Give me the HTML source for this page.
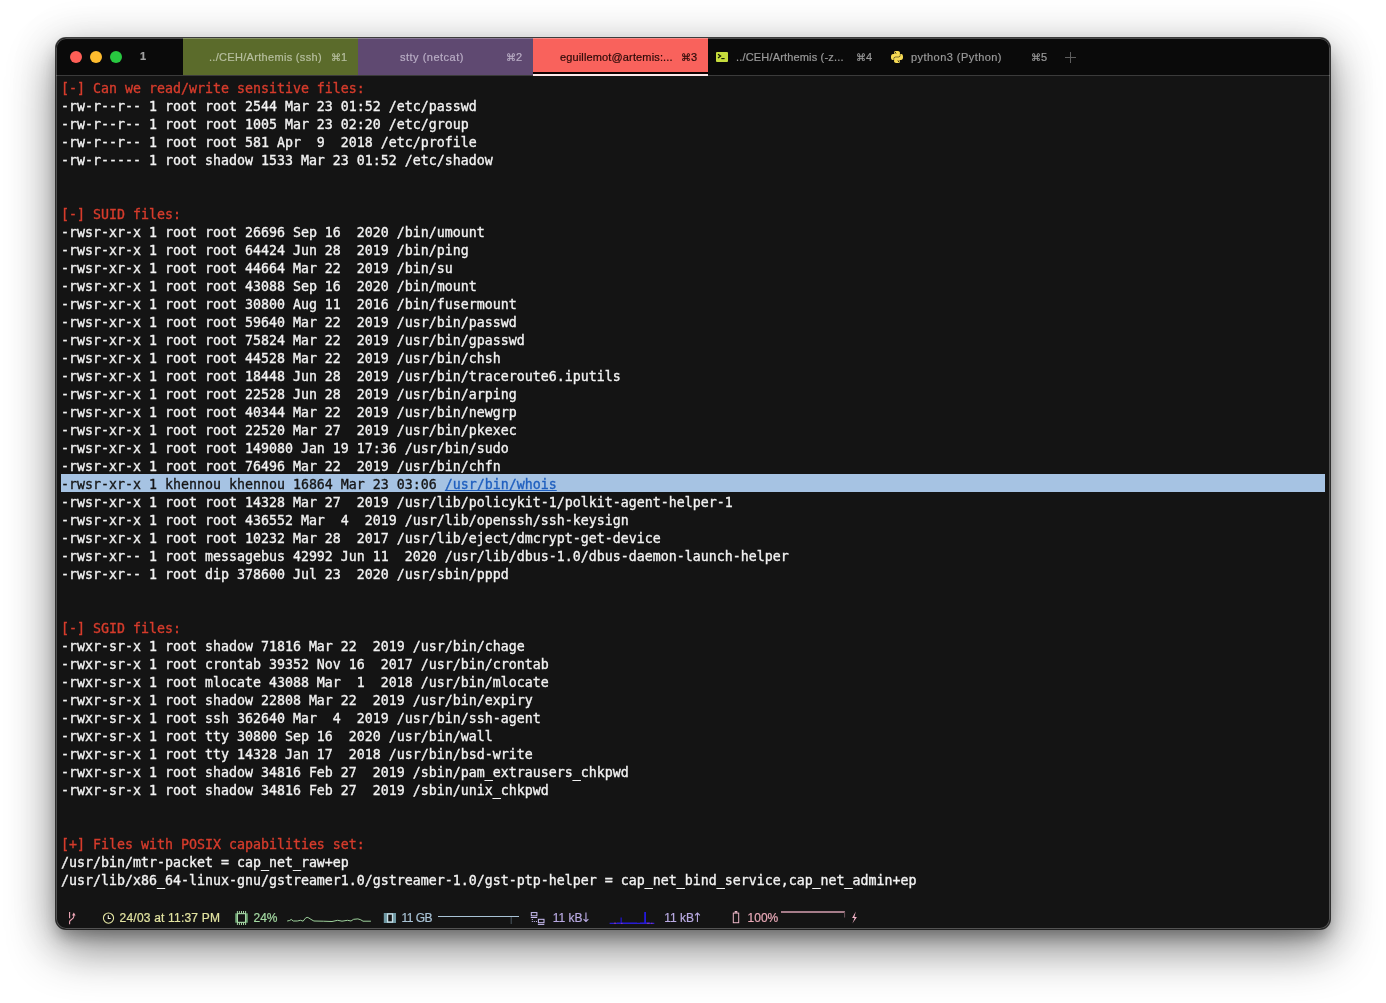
<!DOCTYPE html>
<html><head><meta charset="utf-8"><title>Terminal</title>
<style>
html,body{margin:0;padding:0;}
body{width:1386px;height:1003px;background:#fff;position:relative;overflow:hidden;font-family:"Liberation Sans",sans-serif;}
#win{position:absolute;left:56px;top:38px;width:1274px;height:891px;border-radius:10px;background:#141414;
 box-shadow:0 0 0 1px rgba(0,0,0,.72),0 20px 48px 0 rgba(0,0,0,.45),0 9px 16px -2px rgba(0,0,0,.3),0 4px 46px 8px rgba(0,0,0,.07);overflow:hidden;}
#win:after{content:"";position:absolute;left:0;top:0;right:0;bottom:0;border-radius:10px;box-shadow:inset 0 0 0 1px rgba(255,255,255,.27);pointer-events:none;}
#bar{position:absolute;left:0;top:0;width:100%;height:37px;background:#0a0a0a;border-bottom:1px solid #3b3b3b;}
.dot{position:absolute;top:13px;width:12px;height:12px;border-radius:50%;}
.tab{position:absolute;top:0;height:37px;width:175px;font-size:11px;line-height:38px;color:#9a9a9a;white-space:nowrap;-webkit-text-stroke:.2px currentColor;}
.tab .t{position:absolute;top:0;will-change:transform;}
.tab .k{position:absolute;top:0;right:11px;will-change:transform;}
.cmd{font-family:"DejaVu Sans","Liberation Sans",sans-serif;font-size:10px;}
#term{will-change:transform;position:absolute;left:5px;top:40px;width:1264px;font-family:"DejaVu Sans Mono","Liberation Mono",monospace;font-size:13.29px;line-height:18px;color:#f2f2f2;-webkit-text-stroke:.35px currentColor;}
.ln{height:18px;line-height:22px;white-space:pre;}
.hd{color:#d63c2c;}
.sel{background:#a6c3e3;color:#161616;}
.lk{color:#1f5fbf;text-decoration:underline;}
#status{will-change:transform;position:absolute;left:0;top:862px;width:100%;height:30px;font-size:12px;}
#status span{position:absolute;top:11.3px;-webkit-text-stroke:.2px currentColor;line-height:14px;white-space:nowrap;}
#status span.ar{position:static;font-family:"DejaVu Sans","Liberation Sans",sans-serif;font-size:13px;margin-left:-2px;line-height:0;-webkit-text-stroke:0;}
svg{position:absolute;overflow:visible;}
</style></head><body>
<div id="win">
<div id="bar">
 <div class="dot" style="left:14px;background:#fe5f57"></div>
 <div class="dot" style="left:34px;background:#febc2e"></div>
 <div class="dot" style="left:54px;background:#28c840"></div>
 <div class="tab" style="left:0;width:127px;"><span class="t" style="left:84px;top:-1px;color:#a2a2a2;font-weight:bold;font-size:11px">1</span></div>
 <div class="tab" style="left:127px;background:#5b6b2b;color:#b7bf9f"><span class="t" style="left:26px;letter-spacing:.31px">../CEH/Arthemis (ssh)</span><span class="k"><span class="cmd">⌘</span>1</span></div>
 <div class="tab" style="left:302px;background:#5f4971;color:#b9adc5"><span class="t" style="left:41.5px;letter-spacing:.5px">stty (netcat)</span><span class="k"><span class="cmd">⌘</span>2</span></div>
 <div class="tab" style="left:477px;background:#f9625c;color:#2a0a08;height:34px"><span class="t" style="left:26.5px;letter-spacing:.14px">eguillemot@artemis:...</span><span class="k"><span class="cmd">⌘</span>3</span></div>
 <div style="position:absolute;left:477px;top:34px;width:175px;height:1.7px;background:#100000"></div>
 <div style="position:absolute;left:477px;top:35.7px;width:175px;height:2.3px;background:#fde9ea"></div>
 <div class="tab" style="left:652px;"><span class="t" style="left:28.2px;letter-spacing:.17px">../CEH/Arthemis (-z...</span><span class="k"><span class="cmd">⌘</span>4</span></div>
 <div class="tab" style="left:827px;"><span class="t" style="left:28px;letter-spacing:.45px">python3 (Python)</span><span class="k"><span class="cmd">⌘</span>5</span></div>
</div>
<div id="term">
<div class="ln hd">[-] Can we read/write sensitive files:</div>
<div class="ln">-rw-r--r-- 1 root root 2544 Mar 23 01:52 /etc/passwd</div>
<div class="ln">-rw-r--r-- 1 root root 1005 Mar 23 02:20 /etc/group</div>
<div class="ln">-rw-r--r-- 1 root root 581 Apr  9  2018 /etc/profile</div>
<div class="ln">-rw-r----- 1 root shadow 1533 Mar 23 01:52 /etc/shadow</div>
<div class="ln">&nbsp;</div>
<div class="ln">&nbsp;</div>
<div class="ln hd">[-] SUID files:</div>
<div class="ln">-rwsr-xr-x 1 root root 26696 Sep 16  2020 /bin/umount</div>
<div class="ln">-rwsr-xr-x 1 root root 64424 Jun 28  2019 /bin/ping</div>
<div class="ln">-rwsr-xr-x 1 root root 44664 Mar 22  2019 /bin/su</div>
<div class="ln">-rwsr-xr-x 1 root root 43088 Sep 16  2020 /bin/mount</div>
<div class="ln">-rwsr-xr-x 1 root root 30800 Aug 11  2016 /bin/fusermount</div>
<div class="ln">-rwsr-xr-x 1 root root 59640 Mar 22  2019 /usr/bin/passwd</div>
<div class="ln">-rwsr-xr-x 1 root root 75824 Mar 22  2019 /usr/bin/gpasswd</div>
<div class="ln">-rwsr-xr-x 1 root root 44528 Mar 22  2019 /usr/bin/chsh</div>
<div class="ln">-rwsr-xr-x 1 root root 18448 Jun 28  2019 /usr/bin/traceroute6.iputils</div>
<div class="ln">-rwsr-xr-x 1 root root 22528 Jun 28  2019 /usr/bin/arping</div>
<div class="ln">-rwsr-xr-x 1 root root 40344 Mar 22  2019 /usr/bin/newgrp</div>
<div class="ln">-rwsr-xr-x 1 root root 22520 Mar 27  2019 /usr/bin/pkexec</div>
<div class="ln">-rwsr-xr-x 1 root root 149080 Jan 19 17:36 /usr/bin/sudo</div>
<div class="ln">-rwsr-xr-x 1 root root 76496 Mar 22  2019 /usr/bin/chfn</div>
<div class="ln sel">-rwsr-xr-x 1 khennou khennou 16864 Mar 23 03:06 <span class="lk">/usr/bin/whois</span></div>
<div class="ln">-rwsr-xr-x 1 root root 14328 Mar 27  2019 /usr/lib/policykit-1/polkit-agent-helper-1</div>
<div class="ln">-rwsr-xr-x 1 root root 436552 Mar  4  2019 /usr/lib/openssh/ssh-keysign</div>
<div class="ln">-rwsr-xr-x 1 root root 10232 Mar 28  2017 /usr/lib/eject/dmcrypt-get-device</div>
<div class="ln">-rwsr-xr-- 1 root messagebus 42992 Jun 11  2020 /usr/lib/dbus-1.0/dbus-daemon-launch-helper</div>
<div class="ln">-rwsr-xr-- 1 root dip 378600 Jul 23  2020 /usr/sbin/pppd</div>
<div class="ln">&nbsp;</div>
<div class="ln">&nbsp;</div>
<div class="ln hd">[-] SGID files:</div>
<div class="ln">-rwxr-sr-x 1 root shadow 71816 Mar 22  2019 /usr/bin/chage</div>
<div class="ln">-rwxr-sr-x 1 root crontab 39352 Nov 16  2017 /usr/bin/crontab</div>
<div class="ln">-rwxr-sr-x 1 root mlocate 43088 Mar  1  2018 /usr/bin/mlocate</div>
<div class="ln">-rwxr-sr-x 1 root shadow 22808 Mar 22  2019 /usr/bin/expiry</div>
<div class="ln">-rwxr-sr-x 1 root ssh 362640 Mar  4  2019 /usr/bin/ssh-agent</div>
<div class="ln">-rwxr-sr-x 1 root tty 30800 Sep 16  2020 /usr/bin/wall</div>
<div class="ln">-rwxr-sr-x 1 root tty 14328 Jan 17  2018 /usr/bin/bsd-write</div>
<div class="ln">-rwxr-sr-x 1 root shadow 34816 Feb 27  2019 /sbin/pam_extrausers_chkpwd</div>
<div class="ln">-rwxr-sr-x 1 root shadow 34816 Feb 27  2019 /sbin/unix_chkpwd</div>
<div class="ln">&nbsp;</div>
<div class="ln">&nbsp;</div>
<div class="ln hd">[+] Files with POSIX capabilities set:</div>
<div class="ln">/usr/bin/mtr-packet = cap_net_raw+ep</div>
<div class="ln">/usr/lib/x86_64-linux-gnu/gstreamer1.0/gstreamer-1.0/gst-ptp-helper = cap_net_bind_service,cap_net_admin+ep</div></div>
<div id="status">
 <span style="left:63.6px;color:#e3e4a1;letter-spacing:.2px">24/03 at 11:37 PM</span>
 <span style="left:197.5px;color:#a5dba3">24%</span>
 <span style="left:345.4px;color:#a9c3d6;letter-spacing:-.5px">11 GB</span>
 <span style="left:496.8px;color:#b9aae2">11 kB<span class="ar">↓</span></span>
 <span style="left:608.3px;color:#b9aae2">11 kB<span class="ar">↑</span></span>
 <span style="left:691.6px;color:#e9a9b7">100%</span>
</div>
</div>
<svg id="ov" width="1386" height="1003" viewBox="0 0 1386 1003" style="left:0;top:0;pointer-events:none">
<!-- tab4 terminal icon -->
<rect x="716" y="52" width="12" height="10" rx="1" fill="#c6dd3d"/>
<path d="M718 54.3l2.6 1.8-2.6 1.8" fill="none" stroke="#101400" stroke-width="1.2"/>
<path d="M721.3 58.6h3.3" stroke="#101400" stroke-width="1.1"/>
<!-- python -->
<g transform="translate(891,51) scale(0.5)"><path fill="#f6da55" d="M14.25.18l.9.2.73.26.59.3.45.32.34.34.25.34.16.33.1.3.04.26.02.2-.01.13V8.5l-.05.63-.13.55-.21.46-.26.38-.3.31-.33.25-.35.19-.35.14-.33.1-.3.07-.26.04-.21.02H8.77l-.69.05-.59.14-.5.22-.41.27-.33.32-.27.35-.2.36-.15.37-.1.35-.07.32-.04.27-.02.21v3.06H3.17l-.21-.03-.28-.07-.32-.12-.35-.18-.36-.26-.36-.36-.35-.46-.32-.59-.28-.73-.21-.88-.14-1.05-.05-1.23.06-1.22.16-1.04.24-.87.32-.71.36-.57.4-.44.42-.33.42-.24.4-.16.36-.1.32-.05.24-.01h.16l.06.01h8.16v-.83H6.18l-.01-2.75-.02-.37.05-.34.11-.31.17-.28.25-.26.31-.23.38-.2.44-.18.51-.15.58-.12.64-.1.71-.06.77-.04.84-.02 1.27.05zm-6.3 1.98l-.23.33-.08.41.08.41.23.34.33.22.41.09.41-.09.33-.22.23-.34.08-.41-.08-.41-.23-.33-.33-.22-.41-.09-.41.09zm13.09 3.95l.28.06.32.12.35.18.36.27.36.35.35.47.32.59.28.73.21.88.14 1.04.05 1.23-.06 1.23-.16 1.04-.24.86-.32.71-.36.57-.4.45-.42.33-.42.24-.4.16-.36.09-.32.05-.24.02-.16-.01h-8.22v.82h5.84l.01 2.76.02.36-.05.34-.11.31-.17.29-.25.25-.31.24-.38.2-.44.17-.51.15-.58.13-.64.09-.71.07-.77.04-.84.01-1.27-.04-1.07-.14-.9-.2-.73-.25-.59-.3-.45-.33-.34-.34-.25-.34-.16-.33-.1-.3-.04-.25-.02-.2.01-.13v-5.34l.05-.64.13-.54.21-.46.26-.38.3-.32.33-.24.35-.2.35-.14.33-.1.3-.06.26-.04.21-.02.13-.01h5.84l.69-.05.59-.14.5-.21.41-.28.33-.32.27-.35.2-.36.15-.36.1-.35.07-.32.04-.28.02-.21V6.07h2.09l.14.01zm-6.47 14.25l-.23.33-.08.41.08.41.23.33.33.23.41.08.41-.08.33-.23.23-.33.08-.41-.08-.41-.23-.33-.33-.23-.41-.08-.41.08z"/></g>
<!-- plus -->
<path d="M1065 57.5h11M1070.5 52v11" stroke="#5e5e5e" stroke-width="1"/>
<!-- git branch -->
<g fill="none" stroke="#f2a9b9" stroke-width="1.1">
<path d="M69.6 912v6.2"/><path d="M69.6 924.2v-2.4c0-2.6 4.2-2.2 4.2-5.2v-1.6"/></g>
<path d="M73.8 912.5l1.8 3.1h-3.6z" fill="#f2a9b9"/>
<!-- clock -->
<circle cx="108.5" cy="918.1" r="5.1" fill="none" stroke="#e3e4a1" stroke-width="1.1"/>
<path d="M108.3 915.2v3.3h2.4" fill="none" stroke="#f3f3e0" stroke-width="1.1"/>
<!-- cpu -->
<rect x="235.2" y="913.3" width="12.6" height="9.4" fill="#6aa070"/>
<rect x="237.4" y="913.7" width="8.2" height="8.6" fill="#141414" stroke="#b4e6b2" stroke-width="1"/>
<path d="M237.4 911v2.3M239.4 911v2.3M241.5 911v2.3M243.5 911v2.3M245.6 911v2.3M237.4 922.7v2.3M239.4 922.7v2.3M241.5 922.7v2.3M243.5 922.7v2.3M245.6 922.7v2.3" stroke="#b4e6b2" stroke-width=".9"/>
<polyline points="287.2,921 289.7,920.5 291.2,919.4 293.3,921 297.3,921 300.6,920.3 303.1,921.2 305.3,918.3 307.1,917.3 308.9,918 311,919.4 313.9,921 323.3,921.2 332,921.5 337.7,920.3 342,921.2 347.5,920.3 351,921 353.6,919.3 357.9,918.9 360.8,919.8 363,921.2 370.9,921.2" fill="none" stroke="#9fd39d" stroke-width="1"/>
<!-- mem -->
<rect x="383.8" y="913" width="12.2" height="10" fill="#6f98a3"/>
<rect x="387.6" y="914" width="4.9" height="8" fill="#151515" stroke="#c9e0e8" stroke-width="1.3"/>
<path d="M438 916.5h81" stroke="#a9c3d6" stroke-width="1.2"/>
<path d="M511.2 917v7" stroke="#4a5860" stroke-width="1"/>
<!-- net -->
<g fill="none" stroke="#cbbff4" stroke-width="1"><rect x="531.3" y="912.6" width="5.6" height="3.2"/><path d="M530.8 917.5h6.4"/><rect x="538.4" y="919.3" width="5.6" height="3.4"/><path d="M537.9 924.4h6.4"/></g>
<g fill="#cbbff4"><rect x="531.8" y="919" width="1" height="1"/><rect x="531.8" y="921" width="1" height="1"/><rect x="533.8" y="921" width="1" height="1"/><rect x="535.9" y="921" width="1" height="1"/></g>
<!-- net spark -->
<path d="M609.6 923.3h44.7" stroke="#2a1ed2" stroke-width="1.3"/>
<path d="M617 922.6h20M640 922.5h10" stroke="#2316b8" stroke-width=".8" opacity=".7"/>
<path d="M621.2 917.6v5.5" stroke="#2015c8" stroke-width="1.6" opacity=".8"/><path d="M645.1 912v11" stroke="#2318dd" stroke-width="1.8"/>
<path d="M614 923.2h2M621 923.4h1.5M647 923.3h2.5M651 923.3h1.5" stroke="#b04a9a" stroke-width="1" opacity=".8"/>
<!-- battery -->
<rect x="733.3" y="913.1" width="5.4" height="9.6" fill="none" stroke="#ecb6c6" stroke-width="1"/>
<rect x="734.6" y="911" width="2.8" height="1.8" rx=".6" fill="#ecb6c6"/>
<path d="M781 912h63.9" stroke="#a57c89" stroke-width="1.8"/>
<path d="M844.6 912v5.5" stroke="#6d525b" stroke-width="1"/>
<path d="M855.8 911.6l-3.7 6.4h2.4l-2.1 5.5 4.5-6.4h-2.5z" fill="#f2b2c6"/>
</svg>
</body></html>
